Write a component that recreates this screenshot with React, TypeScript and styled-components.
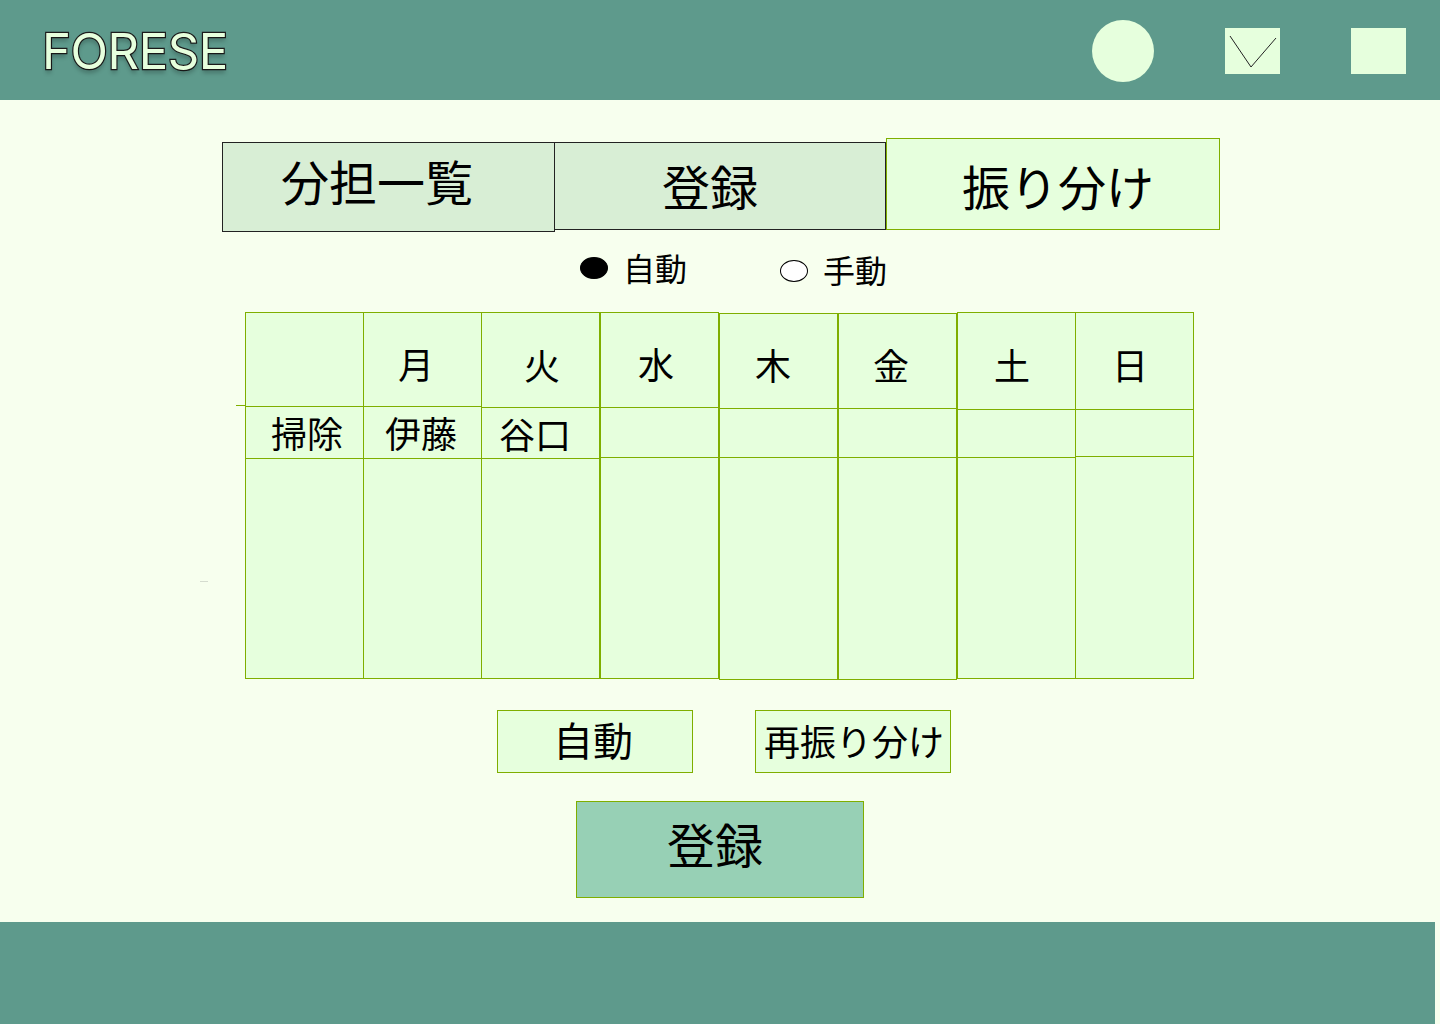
import styled, { createGlobalStyle } from 'styled-components';

type Column = {
  head: string;
  name?: string;
  gap: number;
  top: number;
  headHeight: number;
  nameHeight: number;
  restHeight: number;
  headInset: number;
  headDrop: number;
  nameInset?: number;
};

const columns: Column[] = [
  { head: '', name: '掃除', gap: 0, top: 0, headHeight: 95, nameHeight: 52, restHeight: 221, headInset: 0, headDrop: 0, nameInset: 25 },
  { head: '月', name: '伊藤', gap: -1, top: 0, headHeight: 95, nameHeight: 52, restHeight: 221, headInset: 34, headDrop: 0, nameInset: 21 },
  { head: '火', name: '谷口', gap: -1, top: 0, headHeight: 96, nameHeight: 51, restHeight: 221, headInset: 42, headDrop: 1, nameInset: 17 },
  { head: '水', gap: 0, top: 0, headHeight: 96, nameHeight: 50, restHeight: 222, headInset: 37, headDrop: 0 },
  { head: '木', gap: 0, top: 1, headHeight: 96, nameHeight: 49, restHeight: 223, headInset: 35, headDrop: 0 },
  { head: '金', gap: 0, top: 1, headHeight: 96, nameHeight: 49, restHeight: 223, headInset: 34, headDrop: 0 },
  { head: '土', gap: 0, top: 0, headHeight: 98, nameHeight: 48, restHeight: 222, headInset: 36, headDrop: 1 },
  { head: '日', gap: -1, top: 0, headHeight: 98, nameHeight: 47, restHeight: 223, headInset: 36, headDrop: 1 },
];

export default function App() {
  return (
    <Page>
      <GlobalStyle />
      <Header>
        <Logo>FORESE</Logo>
        <HeaderIcons>
          <Avatar />
          <IconSquare>
            <svg width="55" height="46" viewBox="0 0 55 46" fill="none">
              <path d="M5 8 L26 39 L51 10" stroke="#222" strokeWidth="1" />
            </svg>
          </IconSquare>
          <IconSquare />
        </HeaderIcons>
      </Header>

      <Main>
        <Tabs>
          <Tab $width={333} $height={90} $top={4} $fill="#d8eed5" $stroke="#222222">
            <TabLabel $inset={58} $lift={15}>分担一覧</TabLabel>
          </Tab>
          <Tab $width={331} $height={88} $top={4} $fill="#d8eed5" $stroke="#222222" $noLeft>
            <TabLabel $inset={107} $lift={2}>登録</TabLabel>
          </Tab>
          <Tab $width={334} $height={92} $top={0} $fill="#e6ffdd" $stroke="#7fae00">
            <TabLabel $inset={75} $lift={-2}>振り分け</TabLabel>
          </Tab>
        </Tabs>

        <Radios>
          <RadioItem $lift={0} $width={200}>
            <RadioDot $checked />
            <RadioText $lift={4}>自動</RadioText>
          </RadioItem>
          <RadioItem $lift={-3} $width={110}>
            <RadioDot />
            <RadioText $lift={7}>手動</RadioText>
          </RadioItem>
        </Radios>

        <Table>
          <StrayTick />
          <StrayDash />
          {columns.map((col, i) => (
            <Col key={`col_${i}`} $gap={col.gap} $top={col.top}>
              <HeadCell $height={col.headHeight} $inset={col.headInset} $drop={col.headDrop}>{col.head}</HeadCell>
              <NameCell $height={col.nameHeight} $inset={col.nameInset ?? 0}>{col.name}</NameCell>
              <RestCell $height={col.restHeight} />
            </Col>
          ))}
        </Table>

        <Actions>
          <ActionButton $size={40} $left={0} $right={4} $bottom={6}>自動</ActionButton>
          <ActionButton $size={36} $left={2} $right={0} $bottom={4}>再振り分け</ActionButton>
        </Actions>

        <SubmitButton>登録</SubmitButton>
      </Main>

      <Footer />
    </Page>
  );
}

const GlobalStyle = createGlobalStyle`
  html, body {
    margin: 0;
    padding: 0;
    background: #f7ffee;
  }
  * {
    box-sizing: border-box;
  }
  body {
    font-family: "Noto Sans CJK JP", "Noto Sans", "Liberation Sans", sans-serif;
    color: #000;
  }
`;

const Page = styled.div`
  width: 1440px;
  height: 1024px;
  display: flex;
  flex-direction: column;
  overflow: hidden;
  background: #f7ffee;
`;

const Header = styled.header`
  height: 100px;
  flex: none;
  background: #5e9a8c;
  display: flex;
  align-items: center;
  justify-content: space-between;
  padding: 0 34px 0 42px;
`;

const Logo = styled.div`
  font-family: Inter, "Liberation Sans", sans-serif;
  font-size: 49px;
  line-height: 1;
  letter-spacing: -0.4px;
  color: #e6ffdd;
  -webkit-text-stroke: 2.4px #1c1c1c;
  paint-order: stroke fill;
  text-shadow: 0 4px 4px rgba(0, 0, 0, 0.25);
  margin-top: 3px;
`;

const HeaderIcons = styled.div`
  display: flex;
  align-items: center;
  gap: 71px;
  margin-top: 2px;
`;

const Avatar = styled.div`
  width: 62px;
  height: 62px;
  border-radius: 50%;
  background: #e6ffdd;
`;

const IconSquare = styled.div`
  width: 55px;
  height: 46px;
  background: #e6ffdd;
  svg {
    display: block;
  }
`;

const Main = styled.main`
  flex: 1;
  display: flex;
  flex-direction: column;
  align-items: flex-start;
  padding-top: 38px;
`;

const Tabs = styled.div`
  display: flex;
  align-items: flex-start;
  margin-left: 222px;
`;

const Tab = styled.div<{ $width: number; $height: number; $top: number; $fill: string; $stroke: string; $noLeft?: boolean }>`
  width: ${(p) => p.$width}px;
  height: ${(p) => p.$height}px;
  margin-top: ${(p) => p.$top}px;
  background: ${(p) => p.$fill};
  border: 1px solid ${(p) => p.$stroke};
  ${(p) => (p.$noLeft ? 'border-left: none;' : '')}
  display: flex;
  align-items: center;
`;

const TabLabel = styled.span<{ $inset: number; $lift: number }>`
  font-size: 48px;
  line-height: 1;
  padding-left: ${(p) => p.$inset}px;
  margin-top: ${(p) => -p.$lift}px;
`;

const Radios = styled.div`
  display: flex;
  margin: 17px 0 0 580px;
  height: 63px;
`;

const RadioItem = styled.label<{ $lift: number; $width: number }>`
  width: ${(p) => p.$width}px;
  height: 40px;
  display: flex;
  align-items: center;
  gap: 15px;
  font-size: 32px;
  line-height: 40px;
  margin-top: ${(p) => -p.$lift}px;
`;

const RadioDot = styled.span<{ $checked?: boolean }>`
  width: 28px;
  height: 22px;
  flex: none;
  border-radius: 50%;
  border: 1px solid #000;
  background: ${(p) => (p.$checked ? '#000' : '#fff')};
  margin-top: -3px;
`;

const RadioText = styled.span<{ $lift: number }>`
  margin-top: ${(p) => -p.$lift}px;
`;

const Table = styled.div`
  position: relative;
  display: flex;
  align-items: flex-start;
  margin-left: 245px;
`;

const StrayTick = styled.span`
  position: absolute;
  left: -9px;
  top: 93px;
  width: 10px;
  height: 1px;
  background: #7fae00;
`;

const StrayDash = styled.span`
  position: absolute;
  left: -45px;
  top: 269px;
  width: 8px;
  height: 1px;
  background: #d5dccf;
`;

const Col = styled.div<{ $gap: number; $top: number }>`
  width: 119px;
  margin-left: ${(p) => p.$gap}px;
  margin-top: ${(p) => p.$top}px;
  display: flex;
  flex-direction: column;
  background: #e6ffdd;
  border: 1px solid #7fae00;
`;

const HeadCell = styled.div<{ $height: number; $inset: number; $drop: number }>`
  height: ${(p) => p.$height - 1}px;
  padding: ${(p) => 11 + p.$drop}px 0 0 ${(p) => p.$inset}px;
  font-size: 36px;
  line-height: 79px;
  border-bottom: 1px solid #7fae00;
`;

const NameCell = styled.div<{ $height: number; $inset: number }>`
  height: ${(p) => p.$height}px;
  padding-left: ${(p) => p.$inset}px;
  font-size: 36px;
  line-height: 50px;
  border-bottom: 1px solid #7fae00;
  white-space: nowrap;
`;

const RestCell = styled.div<{ $height: number }>`
  height: ${(p) => p.$height - 2}px;
`;

const Actions = styled.div`
  display: flex;
  gap: 62px;
  margin: 30px 0 0 497px;
`;

const ActionButton = styled.button<{ $size: number; $left: number; $right: number; $bottom: number }>`
  width: 196px;
  height: 63px;
  padding: 0 ${(p) => p.$right}px ${(p) => p.$bottom}px ${(p) => p.$left}px;
  background: #e6ffdd;
  border: 1px solid #7fae00;
  border-radius: 0;
  font-family: inherit;
  font-size: ${(p) => p.$size}px;
  line-height: 1;
  color: #000;
  white-space: nowrap;
`;

const SubmitButton = styled.button`
  width: 288px;
  height: 97px;
  margin: 28px 0 0 576px;
  padding: 0 10px 14px 0;
  background: #97d0b5;
  border: 1px solid #7fae00;
  border-radius: 0;
  font-family: inherit;
  font-size: 48px;
  line-height: 1;
  color: #000;
`;

const Footer = styled.footer`
  width: 1435px;
  height: 102px;
  flex: none;
  background: #5e9a8c;
`;
